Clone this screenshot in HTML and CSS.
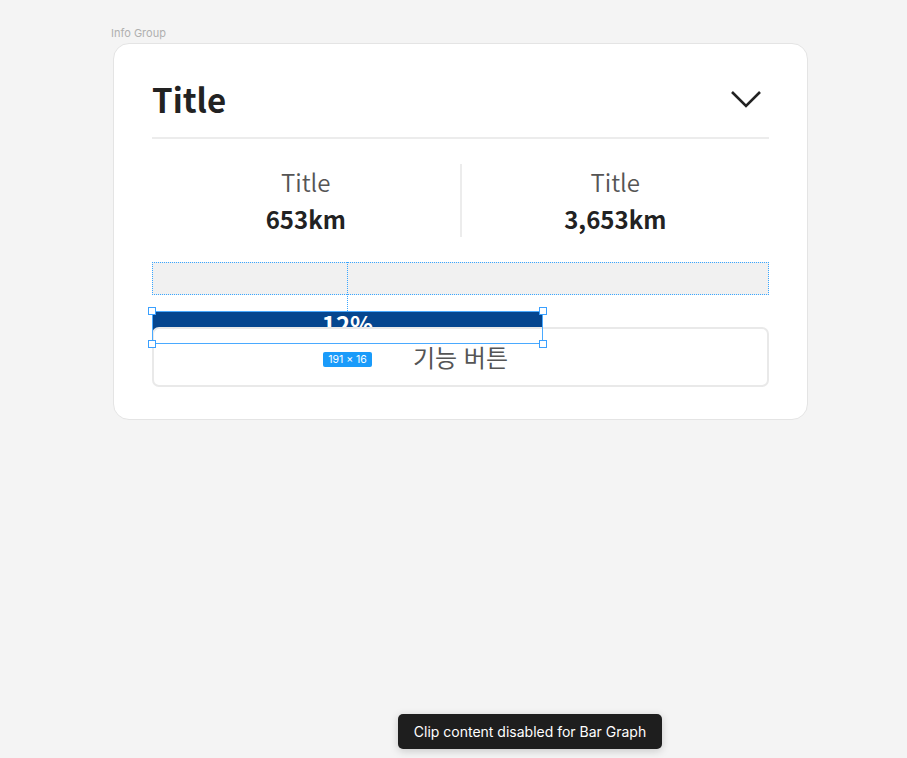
FILE: index.html
```
<!DOCTYPE html>
<html lang="ko">
<head>
<meta charset="utf-8">
<title>Info Group</title>
<link rel="stylesheet" href="styles.css">
</head>
<body>
<div class="canvas">
  <div class="frame-label">Info Group</div>
  <div class="card">
    <div class="header">
      <div class="title">Title</div>
      <svg class="chevron" width="32" height="20" viewBox="0 0 32 20"><polyline points="2,3 16,17 30,3" fill="none" stroke="#222" stroke-width="2.6"/></svg>
    </div>
    <div class="stats">
      <div class="stat">
        <div class="stat-label">Title</div>
        <div class="stat-value">653km</div>
      </div>
      <div class="stat-divider"></div>
      <div class="stat">
        <div class="stat-label">Title</div>
        <div class="stat-value">3,653km</div>
      </div>
    </div>
    <div class="graph">
      <div class="graph-track"></div>
      <div class="bar" style="width:391px">12%</div>
      <div class="guide"></div>
      <div class="selection" style="width:389px">
        <span class="handle tl"></span><span class="handle tr"></span>
        <span class="handle bl"></span><span class="handle br"></span>
        <span class="size-badge">191 × 16</span>
      </div>
    </div>
    <div class="button">기능 버튼</div>
  </div>
  <div class="tooltip">Clip content disabled for Bar Graph</div>
</div>
</body>
</html>
```
FILE: styles.css
```
html, body {
  margin: 0;
  padding: 0;
  background: #f4f4f4;
}
.canvas {
  position: relative;
  width: 907px;
  height: 758px;
  padding: 27px 0 0 111px;
  box-sizing: border-box;
  font-family: "Noto Sans CJK KR", "Noto Sans", sans-serif;
}
.frame-label {
  font-family: Inter, "Liberation Sans", sans-serif;
  font-size: 11px;
  line-height: 12px;
  color: #b0b0b0;
}
.card {
  margin: 4px 0 0 2px;
  width: 695px;
  box-sizing: border-box;
  background: #fff;
  border: 1px solid #e4e4e4;
  border-radius: 16px;
  padding: 37px 38px 32px 38px;
}
.header {
  display: flex;
  justify-content: space-between;
  align-items: center;
  padding-bottom: 20px;
  border-bottom: 2px solid #ececec;
}
.title {
  font-size: 33px;
  line-height: 36px;
  font-weight: 700;
  color: #222;
}
.chevron {
  margin-right: 7px;
  margin-top: 0;
}
.stats {
  display: flex;
  margin-top: 25px;
  height: 73px;
}
.stat {
  flex: 1;
  display: flex;
  flex-direction: column;
  align-items: center;
  padding-top: 2px;
}
.stat-divider {
  width: 2px;
  background: #ececec;
}
.stat-label {
  font-size: 24px;
  line-height: 32px;
  font-weight: 350;
  color: #555;
}
.stat-value {
  margin-top: 5px;
  font-size: 24px;
  line-height: 32px;
  font-weight: 700;
  color: #222;
}
.graph {
  position: relative;
  margin-top: 25px;
}
.graph-track {
  height: 33px;
  box-sizing: border-box;
  background: #f1f1f1;
  border: 1px dotted #3aa6ff;
}
.bar {
  margin-top: 16px;
  height: 32px;
  background: #05468f;
  border-top-right-radius: 6px;
  color: #fff;
  font-size: 24px;
  line-height: 26px;
  font-weight: 700;
  text-align: center;
  box-sizing: border-box;
}
.guide {
  position: absolute;
  left: 195px;
  top: 0;
  height: 49px;
  border-left: 1px dotted #3aa6ff;
}
.selection {
  position: absolute;
  left: 0;
  top: 49px;
  height: 31px;
  border: 1px solid #4aaaff;
  z-index: 3;
}
.handle {
  position: absolute;
  width: 6px;
  height: 6px;
  background: #fff;
  border: 1px solid #3aa0ff;
}
.handle.tl { left: -5px; top: -5px; }
.handle.tr { right: -5px; top: -5px; }
.handle.bl { left: -5px; bottom: -5px; }
.handle.br { right: -5px; bottom: -5px; }
.size-badge {
  position: absolute;
  left: 170px;
  top: 40px;
  width: 49px;
  height: 15px;
  border-radius: 2px;
  background: #1a9bfa;
  color: #fff;
  font-family: Inter, "Liberation Sans", sans-serif;
  font-size: 10.5px;
  line-height: 15px;
  text-align: center;
}
.button {
  position: relative;
  z-index: 2;
  margin-top: -16px;
  height: 60px;
  box-sizing: border-box;
  border: 2px solid #e9e9e9;
  border-radius: 7px;
  background: #fff;
  display: flex;
  align-items: center;
  justify-content: center;
  font-size: 24px;
  color: #555;
  padding-bottom: 2px;
}
.tooltip {
  position: absolute;
  left: 398px;
  top: 714px;
  width: 264px;
  height: 35px;
  border-radius: 5px;
  background: #1e1e1e;
  box-shadow: 0 2px 8px rgba(0,0,0,0.18);
  color: #fff;
  font-family: Inter, "Liberation Sans", sans-serif;
  font-size: 14px;
  line-height: 35px;
  text-align: center;
}
```
